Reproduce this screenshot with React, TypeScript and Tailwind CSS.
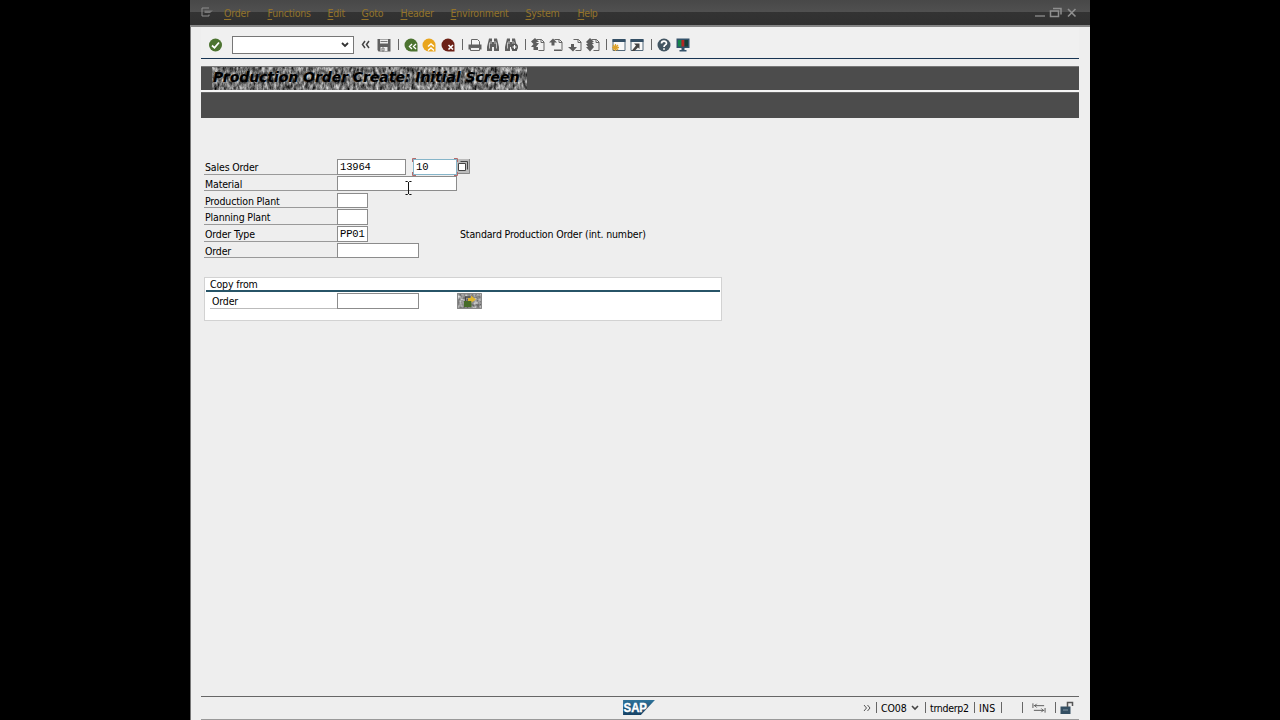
import React from 'react';

interface IconProps {
  children: React.ReactNode;
  className?: string;
}

const Icon: React.FC<IconProps> = ({ children, className = 'w-[14px] h-[14px]' }) => (
  <svg viewBox="0 0 14 14" className={`shrink-0 ${className}`} fill="none">
    {children}
  </svg>
);

const Separator = ({ className = '' }: { className?: string }) => (
  <div className={`w-px h-[11px] shrink-0 bg-[#666] ${className}`} />
);

const menus = [
  { label: 'Order', className: 'w-[43.500px] tracking-[-0.2px]' },
  { label: 'Functions', className: 'w-[60px] tracking-[-0.2px]' },
  { label: 'Edit', className: 'w-[34px] tracking-[-0.2px]' },
  { label: 'Goto', className: 'w-[39px] tracking-[-0.2px]' },
  { label: 'Header', className: 'w-[50px] tracking-[-0.2px]' },
  { label: 'Environment', className: 'w-[75px] tracking-[-0.2px]' },
  { label: 'System', className: 'w-[52px] tracking-[-0.2px]' },
  { label: 'Help', className: 'w-[40px] tracking-[-0.4px]' },
];

const MenuBar = () => (
  <div className="h-[27px] shrink-0 flex items-start border-b-2 border-[#858585] bg-[linear-gradient(#484848_0px,#505050_12px,#333_12px,#303030_25px)] text-[#93742b]">
    <svg viewBox="0 0 13 10" className="ml-[11px] mt-[7px] w-[13px] h-[10px] shrink-0" fill="none">
      <path d="M8 1H1v8h7V7.500" stroke="#8e8e8e" />
      <path d="M3.500 3.500h8.500L9 6H3.500z" fill="#777" />
    </svg>
    <div className="ml-[10px] mt-[5px] flex leading-[17px]">
      {menus.map((menu) => (
        <div key={menu.label} className={`shrink-0 whitespace-nowrap ${menu.className}`}>
          <span className="underline underline-offset-2">{menu.label[0]}</span>
          {menu.label.slice(1)}
        </div>
      ))}
    </div>
    <svg viewBox="0 0 44 12" className="ml-auto mr-[12px] mt-[7px] w-[44px] h-[12px]" fill="none" stroke="#8f8f8f">
      <path d="M1 9h10" strokeWidth="1.300" />
      <path d="M16.500 4h8v5.500h-8z" strokeWidth="1.500" />
      <path d="M19 1.500h8v6" strokeWidth="1.500" />
      <path d="M34 2l7.500 7.500M41.500 2L34 9.500" strokeWidth="1.600" />
    </svg>
  </div>
);

const Page = ({ kind }: { kind: 'first' | 'prev' | 'next' | 'last' }) => (
  <Icon>
    <path d="M5.500 1.500h5l2.500 2.500v8.500H7.500" stroke="#666" />
    <path d="M10 1.500V4.500h3" stroke="#666" />
    {kind === 'first' && <path d="M4 0l4 4H5.500v1H8L5 9h2v3H2.500V9H0l2.500-3L0 3.500z" fill="#5c5c5c" />}
    {kind === 'prev' && <path d="M4 .5l4 4H5.500v3h-3v-3H0zM5 11.500h7v1.500H5z" fill="#5c5c5c" />}
    {kind === 'next' && <path d="M3 6h3v3h3l-4 4.500L0 9h3z" fill="#5c5c5c" />}
    {kind === 'last' && <path d="M4 0l4 4H6l2 2H6l2 3-4 4.500L0 9h2L0 6h2L0 4z" fill="#5c5c5c" />}
  </Icon>
);

const Binoculars = ({ next = false }: { next?: boolean }) => (
  <Icon>
    <path d="M3 .5h3V4h2V.5h3l2 8.500v4H8V9H6v4H1V9z" fill="#606060" />
    <path d="M3.500 4.500v6M10.500 4.500v6M5 3v3M9 3v3" stroke="#ddd" strokeWidth=".8" />
    {next && (
      <>
        <circle cx="10.500" cy="9" r="3.500" fill="#555" />
        <path d="M10.500 7v4M8.500 9h4" stroke="#fff" strokeWidth="1.200" />
      </>
    )}
  </Icon>
);

const Toolbar = () => (
  <div className="h-[30px] shrink-0 mx-[11px] pl-[7px] pt-[5px] flex items-center bg-[#f0f0f0]">
    <Icon>
      <circle cx="7.500" cy="7" r="6.500" fill="#4c7330" />
      <path d="M4 7.500l2.500 2.300L11 4.500" stroke="#fff" strokeWidth="1.800" />
    </Icon>
    <div className="ml-[10px] w-[122px] h-[18px] shrink-0 bg-white border border-[#777] flex items-center justify-end pr-[4px]">
      <svg viewBox="0 0 8 6" className="w-[8px] h-[6px]" fill="none">
        <path d="M1 1l3 3 3-3" stroke="#333" strokeWidth="1.800" />
      </svg>
    </div>
    <svg viewBox="0 0 9 9" className="ml-[7px] w-[9px] h-[9px] shrink-0" fill="none">
      <path d="M4 1L1.500 4.500 4 8M8 1L5.500 4.500 8 8" stroke="#444" strokeWidth="1.500" />
    </svg>
    <Icon className="ml-[7px] w-[14px] h-[14px]">
      <path d="M.5 1h13v12.500h-12L.5 12z" fill="#606060" />
      <path d="M3 1.500h8v4H3zM3.500 9h7v4h-7z" fill="#eee" />
      <path d="M3.500 3.500h7M5 10h2v3H5z" stroke="#777" />
    </Icon>
    <Separator className="ml-[7px]" />

    <div className="ml-[4px] flex gap-[4px]">
      <Icon className="ml-[0.5px] w-[14px] h-[14px]">
        <path d="M7 .5a6.500 6.500 0 100 13h6.500V7A6.500 6.500 0 007 .5z" fill="#4c7330" />
        <path d="M8 6L5.500 8.500 8 11M12 6L9.500 8.500 12 11" stroke="#fff" strokeWidth="1.400" />
      </Icon>
      <Icon>
        <path d="M7 .5a6.500 6.500 0 100 13h6.500V7A6.500 6.500 0 007 .5z" fill="#e9a51c" />
        <path d="M6 8.500L9 6l3 2.500M6 12.500L9 10l3 2.500" stroke="#fff" strokeWidth="1.400" />
      </Icon>
      <Icon className="ml-px w-[14px] h-[14px]">
        <path d="M7 .5a6.500 6.500 0 100 13h6.500V7A6.500 6.500 0 007 .5z" fill="#6c2016" />
        <path d="M7.500 7l4.500 4.500M12 7l-4.500 4.500" stroke="#fff" strokeWidth="1.600" />
      </Icon>
    </div>
    <Separator className="ml-[7px]" />

    <div className="ml-[5.500px] flex gap-[4px]">
      <Icon>
        <path d="M3.500 7V1.500h6l2 2V7" fill="#f4f4f4" stroke="#666" />
        <path d="M.5 6.500h13v5H.5z" fill="#606060" />
        <path d="M2.500 9.500h9v3h-9z" fill="#eee" stroke="#666" />
      </Icon>
      <Binoculars />
      <Binoculars next />
    </div>
    <Separator className="ml-[7px]" />

    <div className="ml-[5px] flex gap-[4.400px]">
      <Page kind="first" />
      <Page kind="prev" />
      <Page kind="next" />
      <Page kind="last" />
    </div>
    <Separator className="ml-[6px]" />

    <div className="ml-[5px] flex gap-[4px]">
      <Icon>
        <path d="M1 1.500h12v11H1z" fill="#f8f8f8" stroke="#52687a" />
        <path d="M.5 1h13v3H.5z" fill="#344f65" />
        <path d="M3.500 6v7M0 9.500h7M1 7l5 5M6 7l-5 5" stroke="#dda22a" strokeWidth="1.300" />
      </Icon>
      <Icon>
        <path d="M1 1.500h12v11H1z" fill="#f8f8f8" stroke="#52687a" />
        <path d="M.5 1h13v3H.5z" fill="#344f65" />
        <path d="M4 5.500h5.500V11L8 9.500 4.500 13H1.500L6 7.500z" fill="#454545" />
      </Icon>
    </div>
    <Separator className="ml-[7px]" />

    <div className="ml-[5px] flex gap-[4px]">
      <Icon>
        <circle cx="7" cy="7" r="6.500" fill="#425562" />
        <path d="M4.500 5.500c0-3 5-3 5-.3C9.500 7 7 6.800 7 9M7 10.200v1.500" stroke="#fff" strokeWidth="1.700" />
      </Icon>
      <Icon className="ml-[0.5px] w-[14px] h-[14px]">
        <path d="M.5 .5h13v9.500H.5z" fill="#34536b" />
        <path d="M2 2h3.500v6.500H2z" fill="#15864b" />
        <path d="M5.500 2h3v6.500h-3z" fill="#b32824" />
        <path d="M8.500 2H12v6.500H8.500z" fill="#173f37" />
        <path d="M5.500 10h3v2h2v1.500h-7V12h2z" fill="#34536b" />
      </Icon>
    </div>
  </div>
);

const TitleBar = () => (
  <div className="mx-[11px] mt-[7px] shrink-0">
    <div className="h-[24px] bg-[#4c4c4c] border-t border-[#777] flex">
      <div className="ml-[11px] relative w-[315px] h-[23px]">
        <svg className="absolute inset-0 w-full h-full">
          <filter id="grain" x="0" y="0" width="100%" height="100%" colorInterpolationFilters="sRGB">
            <feTurbulence type="fractalNoise" baseFrequency="0.34 0.17" numOctaves="3" seed="8" />
            <feColorMatrix values="1.2 0 0 0 -.15  1.2 0 0 0 -.15  1.2 0 0 0 -.15  0 0 0 0 1" />
          </filter>
          <rect width="100%" height="100%" filter="url(#grain)" />
        </svg>
        <h1 className="relative -mt-px pl-px text-[14px] leading-[23px] font-bold italic whitespace-nowrap text-black font-['DejaVu_Sans',sans-serif] [font-stretch:normal] tracking-[-0.05px]">
          Production Order Create: Initial Screen
        </h1>
      </div>
    </div>
    <div className="h-[2px] bg-[#f5f5f5]" />
    <div className="h-[26px] bg-[#4c4c4c] border-t border-[#666]" />
  </div>
);

const Input = ({ width, value = '', className = 'border-[#8c8c8c]' }: { width: string; value?: string; className?: string }) => (
  <div
    className={`h-[15.500px] shrink-0 bg-white border pl-[2px] text-[10.500px] leading-[14px] font-['Liberation_Mono',monospace] ${width} ${className}`}
  >
    {value}
  </div>
);

interface FieldProps {
  label: string;
  width: string;
  value?: string;
  children?: React.ReactNode;
}

const Field: React.FC<FieldProps> = ({ label, width, value, children }) => (
  <div className="h-[16.800px] flex items-start">
    <div className="w-[133px] h-[15.500px] shrink-0 pl-px border-b border-[#999] leading-[16px] whitespace-nowrap">
      {label}
    </div>
    <Input width={width} value={value} />
    {children}
  </div>
);

const Form = () => (
  <div className="ml-[14px] mt-[41px] shrink-0">
    <Field label="Sales Order" width="w-[69px]" value="13964">
      <div className="ml-[7px] relative">
        <Input width="w-[44px]" value="10" className="border-[#86b5c9]" />
        <svg viewBox="0 0 46 18" className="absolute -left-px -top-px w-[46px] h-[18px]" fill="none" stroke="#b56a6a">
          <path d="M4 .5H.5V4M42 .5h3.500V4M.5 14v3.500H4M45.500 14v3.500H42" />
        </svg>
      </div>
      <svg viewBox="0 0 13 15" className="w-[13px] h-[15px]" fill="none">
        <path d="M0 0h13v15H0z" fill="#bbb" />
        <path d="M3.500 2.500h7v8" stroke="#444" />
        <path d="M1.500 4.500h7v7h-7z" fill="#fff" stroke="#444" />
        <path d="M12.500 0v14.500H0" stroke="#888" />
      </svg>
    </Field>
    <Field label="Material" width="w-[120px]" />
    <Field label="Production Plant" width="w-[31px]" />
    <Field label="Planning Plant" width="w-[31px]" />
    <Field label="Order Type" width="w-[31px]" value="PP01">
      <span className="ml-[92px] leading-[17px] whitespace-nowrap">Standard Production Order (int. number)</span>
    </Field>
    <Field label="Order" width="w-[82px]" />

    <div className="mt-[17.500px] w-[518px] h-[44px] bg-white border border-[#d2d2d2] px-px">
      <div className="h-[14px] pl-[4px] border-b-2 border-[#275467] leading-[13px]">Copy from</div>
      <div className="mt-px ml-[4px] flex items-start">
        <div className="w-[127px] h-[15.500px] pl-[2px] border-b border-[#bbb] leading-[16px]">Order</div>
        <Input width="w-[82px]" />
        <svg viewBox="0 0 25 16" className="ml-[38px] w-[25px] h-[16px]">
          <filter id="grain2" x="0" y="0" width="100%" height="100%" colorInterpolationFilters="sRGB">
            <feTurbulence type="fractalNoise" baseFrequency="0.35" numOctaves="2" seed="3" />
            <feColorMatrix values=".8 0 0 0 .2  .8 0 0 0 .2  .8 0 0 0 .2  0 0 0 0 1" />
          </filter>
          <rect width="25" height="16" filter="url(#grain2)" />
          <path d="M.5 .5h24v15H.5z" fill="none" stroke="#888" />
          <path d="M7 8h7.500v6H7z" fill="#476c29" />
          <path d="M11 5h3V2.500l5 4-4.500 3V8H11z" fill="#dfb52c" />
          <path d="M8.500 8V4h5" fill="none" stroke="#444" strokeWidth="1.300" />
        </svg>
      </div>
    </div>
  </div>
);

const StatusBar = () => (
  <div className="mt-auto mx-[11px] h-[24px] shrink-0 border-y border-t-[#666] border-b-[#999] flex items-start">
    <svg viewBox="0 0 34 16" className="ml-[421px] mt-[3px] w-[34px] h-[15px] shrink-0">
      <defs>
        <linearGradient id="sap" x1="0" y1="0" x2="0" y2="1">
          <stop offset="0" stopColor="#2e7299" />
          <stop offset="1" stopColor="#154165" />
        </linearGradient>
      </defs>
      <path d="M0 0h34L19 16H0z" fill="url(#sap)" />
      <text
        x=".5"
        y="13"
        textLength="25"
        lengthAdjust="spacingAndGlyphs"
        fill="#fff"
        stroke="#fff"
        strokeWidth=".4"
        className="text-[13.500px] tracking-normal font-bold font-['Liberation_Sans',sans-serif]"
      >
        SAP
      </text>
    </svg>
    <div className="ml-[207px] h-[21px] flex items-center leading-[16px] whitespace-nowrap">
      <svg viewBox="0 0 8 8" className="w-[8px] h-[8px]" fill="none">
        <path d="M1 1l2.500 3L1 7M4.500 1L7 4 4.500 7" stroke="#555" />
      </svg>
      <Separator className="ml-[5px]" />
      <span className="ml-[4px] w-[27px] shrink-0 tracking-[-0.1px]">CO08</span>
      <svg viewBox="0 0 8 6" className="ml-[3px] w-[8px] h-[6px]" fill="none">
        <path d="M1 1l3 3 3-3" stroke="#444" strokeWidth="1.600" />
      </svg>
      <Separator className="ml-[6px]" />
      <span className="ml-[4px] w-[40px] shrink-0 tracking-[-0.3px]">trnderp2</span>
      <Separator className="ml-[4px]" />
      <span className="ml-[4px] w-[18px] shrink-0 tracking-[0.2px]">INS</span>
      <Separator className="ml-[4px]" />
      <Separator className="ml-[20px]" />
      <svg viewBox="0 0 15 12" className="ml-[9px] w-[14px] h-[12px]" fill="none" stroke="#555">
        <path d="M1 1v5M2 3.500h11M5 1.500l-2 2 2 2M14 6v5M13 8.500H2M10 6.500l2 2-2 2" />
      </svg>
      <Separator className="ml-[9px]" />
      <svg viewBox="0 0 14 14" className="ml-[4px] w-[14px] h-[14px]" fill="none">
        <path d="M.5 5.500h10V13H.5z" fill="#344f63" />
        <path d="M7.500 6V1.500h5V5" stroke="#555" strokeWidth="1.500" />
        <path d="M3 9h5" stroke="#8195a4" />
      </svg>
    </div>
  </div>
);

export default function App() {
  return (
    <div className="relative w-[1280px] h-[720px] overflow-hidden bg-black flex justify-center">
      <div className="w-[900px] h-[720px] flex flex-col bg-[#eee] shadow-[inset_1px_0_0_#777] text-black text-[10.500px] tracking-[-0.15px] font-['DejaVu_Sans_Condensed','DejaVu_Sans',sans-serif] [font-stretch:condensed]">
        <MenuBar />
        <Toolbar />
        <div className="mx-[11px] mt-[1px] h-px shrink-0 bg-[#173453]" />
        <TitleBar />
        <Form />
        <StatusBar />
      </div>

      {/* Text cursor */}
      <svg viewBox="0 0 7 14" className="absolute left-[405px] top-[181px] w-[7px] h-[14px]" fill="none" stroke="#111">
        <path d="M.5 .5h2l1 1 1-1h2M3.500 1v12M.5 13.500h2l1-1 1 1h2" />
      </svg>
    </div>
  );
}
